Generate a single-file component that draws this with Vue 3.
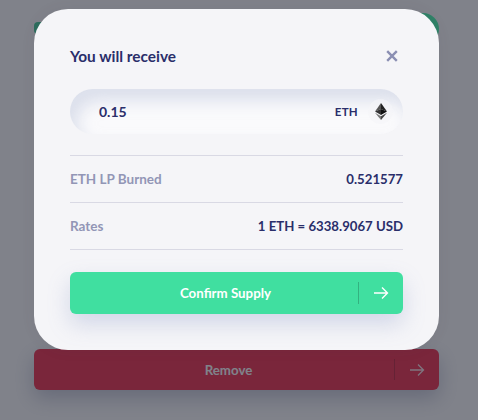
<script setup>
const rows = [
  { label: 'ETH LP Burned', value: '0.521577' },
  { label: 'Rates', value: '1 ETH = 6338.9067 USD' }
]
</script>

<template>
  <div class="page">
    <div class="backdrop-content">
      <div class="under-top">
        <span class="under-tab"></span>
        <span class="under-badge"></span>
      </div>
      <button class="under-remove">
        <span class="btn-label">Remove</span>
        <span class="btn-sep"></span>
        <svg class="arrow" width="16" height="14" viewBox="0 0 16 14" fill="none">
          <path d="M1 7H14.5M9 1.5L14.5 7L9 12.5" stroke="currentColor" stroke-width="1.3" />
        </svg>
      </button>
    </div>
    <div class="scrim"></div>
    <section class="modal">
      <header class="head">
        <h2>You will receive</h2>
        <svg class="close" width="12" height="12" viewBox="0 0 12 12" fill="none">
          <path d="M1.2 1.2L10.8 10.8M10.8 1.2L1.2 10.8" stroke="#8b8fb3" stroke-width="2.4" />
        </svg>
      </header>
      <div class="field">
        <span class="amount">0.15</span>
        <span class="unit">ETH</span>
        <span class="coin">
          <svg width="12" height="17" viewBox="0 0 12 17">
            <path d="M6 0L0 8.6L6 5.9Z" fill="#555" />
            <path d="M6 0L12 8.6L6 5.9Z" fill="#222" />
            <path d="M0 8.6L6 5.9V12Z" fill="#333" />
            <path d="M12 8.6L6 5.9V12Z" fill="#111" />
            <path d="M0 9.8L6 17V13.3Z" fill="#777" />
            <path d="M12 9.8L6 17V13.3Z" fill="#444" />
          </svg>
        </span>
      </div>
      <dl class="rows">
        <div v-for="row in rows" :key="row.label" class="row">
          <dt>{{ row.label }}</dt>
          <dd>{{ row.value }}</dd>
        </div>
      </dl>
      <button class="confirm">
        <span class="btn-label">Confirm Supply</span>
        <span class="btn-sep"></span>
        <svg class="arrow" width="16" height="14" viewBox="0 0 16 14" fill="none">
          <path d="M1 7H14.5M9 1.5L14.5 7L9 12.5" stroke="currentColor" stroke-width="1.4" />
        </svg>
      </button>
    </section>
  </div>
</template>

<style>
html, body { margin: 0; background: #7f818a; }
</style>

<style scoped>
.page {
  position: relative;
  width: 478px;
  height: 420px;
  overflow: hidden;
  font-family: "Lato", "Noto Sans", sans-serif;
  background: #fff;
}
.backdrop-content {
  display: flex;
  flex-direction: column;
  width: 405px;
  padding: 13px 0 0 34px;
}
.under-top {
  position: relative;
  height: 60px;
  margin-bottom: 276px;
}
.under-tab {
  position: absolute;
  left: 0;
  top: 9px;
  width: 30px;
  height: 12px;
  border-radius: 4px;
  background: #3fcf98;
}
.under-badge {
  position: absolute;
  right: 0;
  top: 0;
  width: 32px;
  height: 32px;
  border-radius: 50%;
  background: #43ffaf;
}
.under-remove, .confirm {
  position: relative;
  display: flex;
  align-items: center;
  justify-content: center;
  box-sizing: border-box;
  width: 100%;
  border: 0;
  font: inherit;
  font-weight: 700;
  font-size: 13.3px;
  border-radius: 6px;
}
.under-remove {
  height: 41px;
  padding: 0 16px 0 0;
  background: #f12a49;
  color: #fff;
  box-shadow: 0 8px 20px rgba(60, 70, 120, 0.3);
}
.confirm {
  height: 42px;
  margin-top: 22px;
  padding: 0 22px 0 0;
  background: #40dfa0;
  color: #fff;
  box-shadow: 0 10px 22px rgba(120, 135, 190, 0.28);
}
.btn-sep {
  position: absolute;
  right: 44px;
  top: 10px;
  bottom: 10px;
  width: 1px;
  background: rgba(0, 0, 0, 0.2);
}
.arrow {
  position: absolute;
  right: 14px;
  top: 50%;
  margin-top: -7px;
}
.scrim {
  position: absolute;
  inset: 0;
  background: rgba(32, 35, 50, 0.57);
}
.modal {
  position: absolute;
  left: 34px;
  top: 9px;
  box-sizing: border-box;
  width: 405px;
  height: 341px;
  padding: 38px 36px 0;
  border-radius: 34px;
  background: #f5f5f8;
  box-shadow: 0 0 14px rgba(60, 60, 80, 0.08);
}
.head {
  display: flex;
  align-items: center;
  justify-content: space-between;
  height: 18px;
  padding-right: 5px;
}
.head h2 {
  margin: 0;
  font-size: 15.4px;
  line-height: 18px;
  font-weight: 700;
  color: #2a2e6a;
}
.field {
  display: flex;
  align-items: center;
  height: 45px;
  margin-top: 24px;
  padding: 0 10px 0 29px;
  border-radius: 23px;
  background: #fafafc;
  box-shadow: inset 7px 12px 16px rgba(195, 202, 222, 0.55);
}
.amount {
  flex: 1;
  font-size: 14px;
  font-weight: 700;
  color: #2a2e6a;
}
.unit {
  font-size: 11.5px;
  font-weight: 700;
  letter-spacing: 0.3px;
  color: #2a2e6a;
}
.coin {
  display: flex;
  align-items: center;
  justify-content: center;
  width: 25px;
  height: 25px;
  margin-left: 10px;
  border-radius: 50%;
  background: rgba(245, 245, 249, 0.6);
}
.rows {
  margin: 21px 0 0;
  border-top: 1px solid #d9d9e4;
}
.row {
  display: flex;
  align-items: center;
  justify-content: space-between;
  height: 46px;
  border-bottom: 1px solid #d9d9e4;
  font-size: 13.2px;
  font-weight: 700;
}
.row dt { color: #9296b6; font-size: 13.5px; }
.row dd { margin: 0; color: #2a2e6a; }
.under-remove .arrow { opacity: 0.85; }
</style>
